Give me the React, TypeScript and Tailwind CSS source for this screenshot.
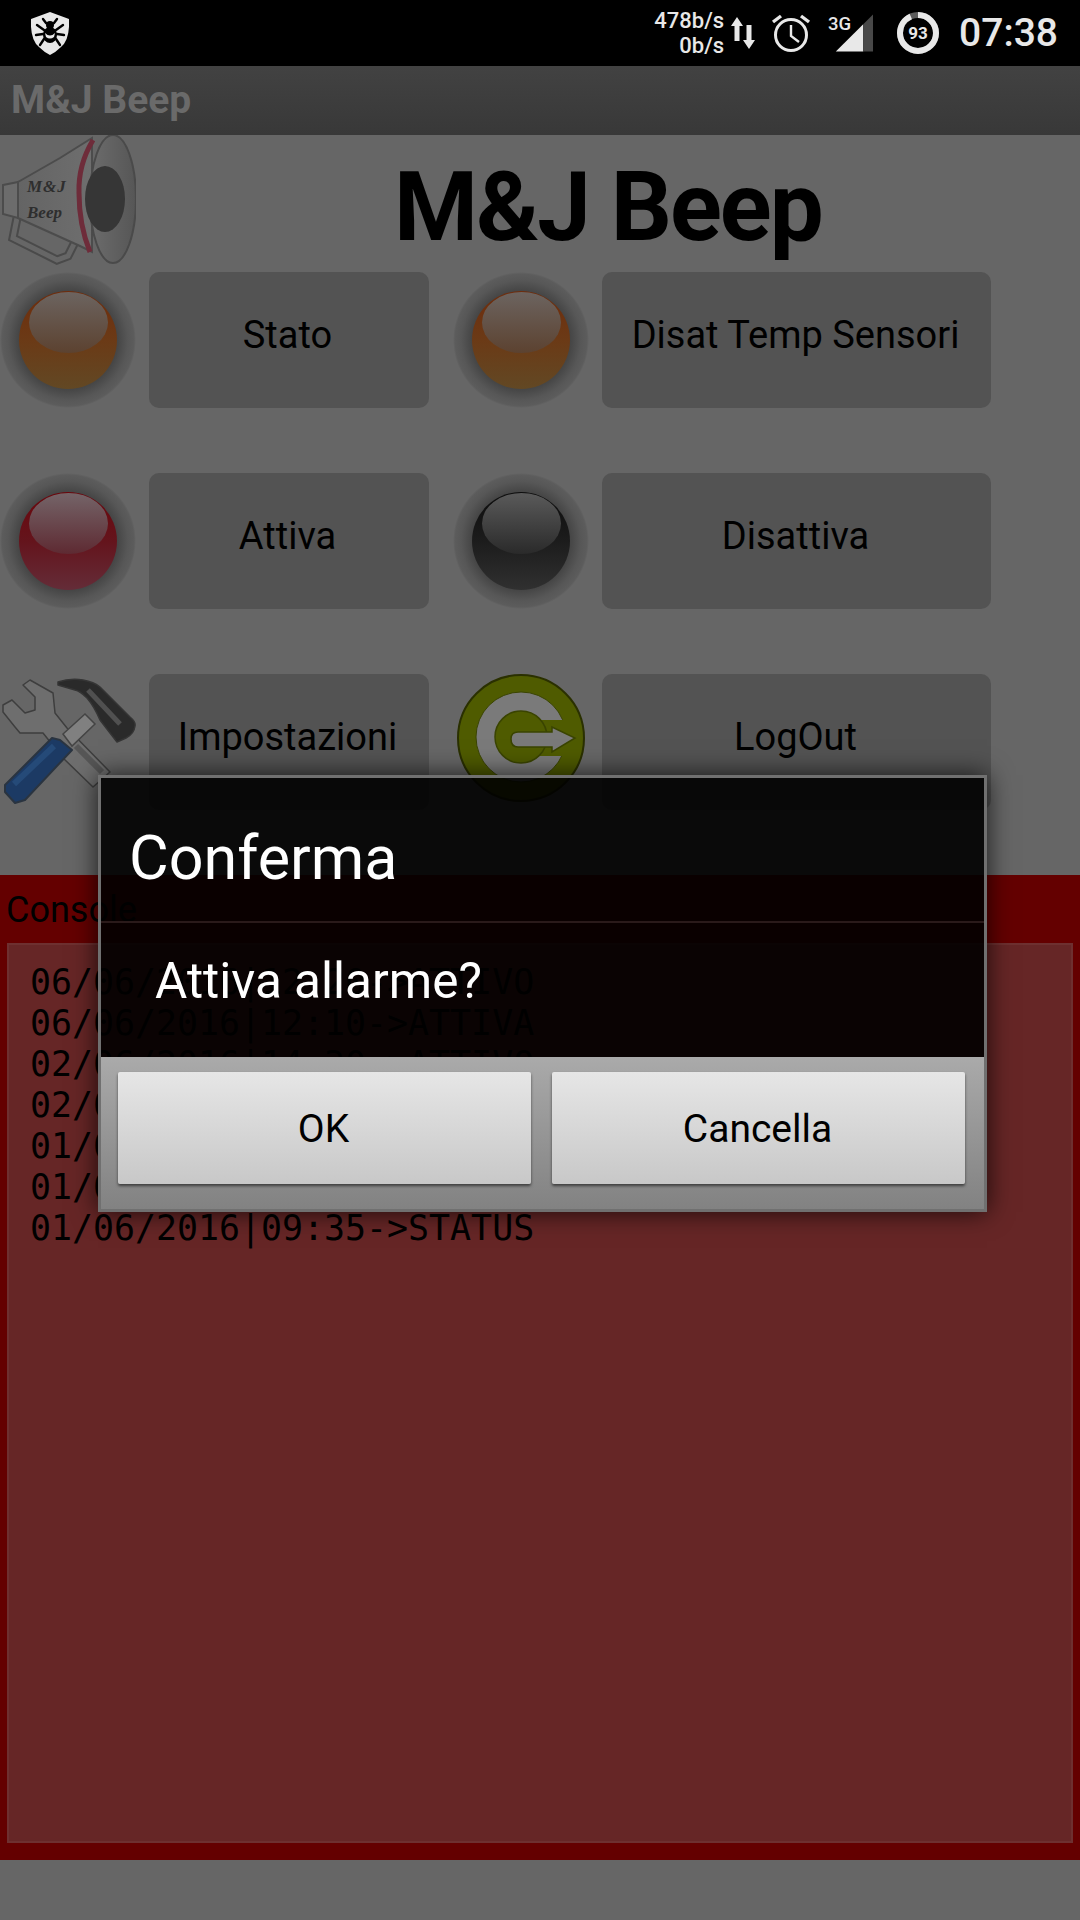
const logLines = [
  "06/06/2016|12:20->ATTIVO",
  "06/06/2016|12:10->ATTIVA",
  "02/06/2016|14:30->ATTIVO",
  "02/06/2016|14:29->STATUS",
  "01/06/2016|09:40->ATTIVA",
  "01/06/2016|09:36->ATTIVO",
  "01/06/2016|09:35->STATUS",
];

const ledColors = {
  orange: { top: "#6e2c0c", mid: "#6b3a16", bottom: "#624824", hiTop: "#6c6460", hiBottom: "#5c4230", edge: "#6c2808" },
  red: { top: "#6a060c", mid: "#64141c", bottom: "#642c38", hiTop: "#746468", hiBottom: "#5e2a32", edge: "#600000" },
  black: { top: "#0c0c0c", mid: "#1c1c1c", bottom: "#303030", hiTop: "#5a5a5a", hiBottom: "#2a2a2a", edge: "#000000" },
};

const Led = ({ color }: { color: keyof typeof ledColors }) => {
  const c = ledColors[color];
  return (
    <svg viewBox="0 0 136 136" className="h-[136px] w-[136px] shrink-0">
      <defs>
        <radialGradient id={`ring-${color}`}>
          <stop offset="0.72" stopColor="#454545" />
          <stop offset="0.8" stopColor="#4e4e4e" />
          <stop offset="0.88" stopColor="#575757" />
          <stop offset="0.97" stopColor="#5c5c5c" />
          <stop offset="1" stopColor="#666666" />
        </radialGradient>
        <linearGradient id={`body-${color}`} x1="0" y1="0" x2="0" y2="1">
          <stop offset="0" stopColor={c.top} />
          <stop offset="0.5" stopColor={c.mid} />
          <stop offset="1" stopColor={c.bottom} />
        </linearGradient>
        <linearGradient id={`hi-${color}`} x1="0" y1="0" x2="0" y2="1">
          <stop offset="0" stopColor={c.hiTop} />
          <stop offset="1" stopColor={c.hiBottom} />
        </linearGradient>
      </defs>
      <circle cx="68" cy="68" r="68" fill={`url(#ring-${color})`} />
      <circle cx="68" cy="68" r="49" fill={`url(#body-${color})`} />
      <path d="M36 32 Q68 8 100 32 Q68 14 36 32Z" fill={c.edge} />
      <ellipse cx="68.5" cy="50.5" rx="39.5" ry="30.5" fill={`url(#hi-${color})`} />
    </svg>
  );
};

const Megaphone = () => (
  <svg viewBox="0 5 136 130" className="h-[130px] w-[136px] shrink-0">
    <defs>
      <linearGradient id="bell" x1="0" y1="0" x2="1" y2="0">
        <stop offset="0" stopColor="#6c6c6c" />
        <stop offset="1" stopColor="#565656" />
      </linearGradient>
      <linearGradient id="cone" x1="0" y1="0" x2="1" y2="0">
        <stop offset="0" stopColor="#646464" />
        <stop offset="1" stopColor="#6e6e6e" />
      </linearGradient>
    </defs>
    <path d="M17 88 L13 108 L57 130 L68 126 L76 110" fill="none" stroke="#4a4a4a" strokeWidth="9" />
    <path d="M17 88 L13 108 L57 130 L68 126 L76 110" fill="none" stroke="#666666" strokeWidth="5" />
    <path d="M3 55 L18 52 L18 88 L3 84Z" fill="#6c6c6c" stroke="#4c4c4c" strokeWidth="2" />
    <path d="M18 52 L60 28 L92 8 L92 122 L80 116 L18 88Z" fill="url(#cone)" stroke="#4c4c4c" strokeWidth="2" />
    <ellipse cx="113" cy="69" rx="23" ry="64" fill="url(#bell)" stroke="#4a4a4a" strokeWidth="2" />
    <ellipse cx="105" cy="69" rx="20" ry="33" fill="#363636" />
    <path d="M93 10 Q78 35 79 63 Q79 95 90 122" fill="none" stroke="#6e2c3a" strokeWidth="5" />
    <text x="27" y="62" fontFamily="'Liberation Serif', serif" fontSize="17" fontStyle="italic" fontWeight="700" fill="#2e2e2e" letterSpacing="1">M&amp;J</text>
    <text x="27" y="88" fontFamily="'Liberation Serif', serif" fontSize="17" fontStyle="italic" fontWeight="700" fill="#2e2e2e">Beep</text>
  </svg>
);

const Tools = () => (
  <svg viewBox="0 4 136 136" className="h-[136px] w-[136px] shrink-0">
    <path d="M3 35 L12 30 L25 43 L35 40 L35 27 L23 15 L30 10 L53 23 L55 43 L67 58 L110 102 L93 117 L63 88 L43 63 L20 63 L15 57 L3 42Z" fill="#6e6e6e" stroke="#3e3e3e" strokeWidth="1.5" strokeLinejoin="round" />
    <path d="M76 76 L102 102" stroke="#565656" strokeWidth="6" fill="none" />
    <path d="M63 64 L85 44 L95 54 L72 76Z" fill="#808080" stroke="#444444" strokeWidth="1.5" />
    <path d="M5 115 L52 68 L60 70 L72 80 L25 130 L15 133 L5 122Z" fill="#1c3a64" stroke="#2a3440" strokeWidth="2" strokeLinejoin="round" />
    <path d="M14 114 L54 76" stroke="#254a78" strokeWidth="6" fill="none" />
    <path d="M58 12 Q70 8 83 10 Q94 12 100 17 L130 47 Q136 52 135 56 Q134 64 126 68 L117 72 L110 63 L100 50 Q94 36 87 28 Q80 21 75 20 L58 15Z" fill="#2a2a2a" stroke="#353535" strokeWidth="1.5" strokeLinejoin="round" />
    <path d="M88 20 L120 54" stroke="#505050" strokeWidth="5" fill="none" />
  </svg>
);

const LogoutIcon = () => (
  <svg viewBox="3 4 136 136" className="h-[136px] w-[136px] shrink-0">
    <circle cx="71" cy="68" r="63" fill="#4f5b00" stroke="#2a3000" strokeWidth="2" />
    <circle cx="71" cy="67" r="45" fill="#7a7a7a" stroke="#3a4400" strokeWidth="1" />
    <rect x="88" y="50" width="32" height="36" fill="#4f5b00" />
    <circle cx="71" cy="67" r="26" fill="#4f5b00" stroke="#3a4400" strokeWidth="1.5" />
    <path d="M68 62 H102 V57 L125 68 L102 82 V77 H68 Q61 77 61 69 Q61 62 68 62Z" fill="#7a7a7a" stroke="#3a4400" strokeWidth="1.5" />
  </svg>
);

const ActionButton = ({ label, width, inset }: { label: string; width: string; inset: string }) => (
  <button className={`flex h-[136px] items-start justify-center rounded-[10px] bg-[#535353] pt-[35px] text-[38px] leading-[56px] text-black ${inset} ${width}`}>
    {label}
  </button>
);

const DialogButton = ({ label }: { label: string }) => (
  <button className="h-[112px] flex-1 rounded-[2px] bg-gradient-to-b from-[#e6e6e6] to-[#c8c8c8] pr-[2px] pt-[3px] text-[39px] text-black shadow-[0_2px_3px_rgba(0,0,0,0.55)]">
    {label}
  </button>
);

const StatusBar = () => (
  <div className="flex h-[66px] items-center justify-between bg-black pl-[31px] pr-[22px] text-[#e8e8e8]">
    <svg viewBox="0 0 38 43" className="h-[43px] w-[38px]">
      <path d="M19 0 L38 7 Q39 28 30 35 Q25 40 19 43 Q13 40 8 35 Q-1 28 0 7Z" fill="#e8e8e8" />
      <ellipse cx="19" cy="23" rx="7" ry="8" fill="#000" />
      <circle cx="19" cy="13" r="4" fill="#000" />
      <path d="M14 21 Q19 26 24 21 L23 25 Q19 28 15 25Z" fill="#e8e8e8" />
      <path d="M12 7 L15 11 M26 7 L23 11 M6 13 L13 18 M32 13 L25 18 M5 23 L12 22 M33 23 L26 22 M9 33 L13 27 M29 33 L25 27" stroke="#000" strokeWidth="2.4" strokeLinecap="round" fill="none" />
    </svg>
    <div className="flex items-center">
      <div className="flex flex-col items-end text-[22px] font-medium leading-[25px]">
        <span>478b/s</span>
        <span>0b/s</span>
      </div>
      <svg viewBox="0 0 26 36" className="ml-[6px] h-[36px] w-[26px]">
        <path d="M7 2 L13 11 H9.5 V26 H4.5 V11 H1Z" fill="#e8e8e8" />
        <path d="M19 34 L25 25 H21.5 V10 H16.5 V25 H13Z" fill="#e8e8e8" />
      </svg>
      <svg viewBox="0 0 40 40" className="ml-[15px] h-[40px] w-[40px]" fill="none" stroke="#e8e8e8">
        <circle cx="20" cy="22" r="15.5" strokeWidth="3" />
        <path d="M20 12 V23 L28 29" strokeWidth="2.4" />
        <path d="M2 9 L10 3 M38 9 L30 3" strokeWidth="3.4" />
      </svg>
      <div className="relative ml-[15px] h-[40px] w-[48px]">
        <svg viewBox="0 0 49 40" className="h-[40px] w-[48px]">
          <path d="M10 39 L38 11 V39Z" fill="#e8e8e8" />
          <path d="M38 11 L48 1 V39 H38Z" fill="#484848" />
        </svg>
        <span className="absolute left-[2px] top-[1px] text-[18.5px] font-medium leading-[20px]">3G</span>
      </div>
      <div className="relative ml-[23px] flex h-[42px] w-[42px] items-center justify-center">
        <svg viewBox="0 0 42 42" className="absolute inset-0 h-[42px] w-[42px]" fill="none" strokeWidth="6">
          <circle cx="21" cy="21" r="18" stroke="#5c5c5c" />
          <circle cx="21" cy="21" r="18" stroke="#e8e8e8" strokeDasharray="105 113" transform="rotate(-90 21 21)" />
        </svg>
        <span className="text-[17px] font-bold leading-none">93</span>
      </div>
      <span className="ml-[20px] text-[39px] font-medium leading-none">07:38</span>
    </div>
  </div>
);

export default function App() {
  return (
    <div className="relative h-[1920px] w-[1080px] overflow-hidden bg-[#666666] font-['Roboto',sans-serif]">
      <StatusBar />
      <div className="flex h-[69px] items-center bg-gradient-to-b from-[#424242] to-[#383838] pl-[11px] text-[39px] font-bold text-[#6a6a6a]">
        M&amp;J Beep
      </div>

      <div className="flex h-[137px] items-start">
        <Megaphone />
        <h1 className="ml-[258px] mt-[16px] text-[96px] font-bold leading-[112px] tracking-[-2px] text-black">M&amp;J Beep</h1>
      </div>

      <div className="flex flex-col gap-[65px]">
        <div className="flex items-start">
          <Led color="orange" />
          <div className="ml-[13px]"><ActionButton label="Stato" width="w-[280px]" inset="pr-[3px]" /></div>
          <div className="ml-[24px]"><Led color="orange" /></div>
          <div className="ml-[13px]"><ActionButton label="Disat Temp Sensori" width="w-[389px]" inset="pr-[2px]" /></div>
        </div>
        <div className="flex items-start">
          <Led color="red" />
          <div className="ml-[13px]"><ActionButton label="Attiva" width="w-[280px]" inset="pr-[3px]" /></div>
          <div className="ml-[24px]"><Led color="black" /></div>
          <div className="ml-[13px]"><ActionButton label="Disattiva" width="w-[389px]" inset="pr-[2px]" /></div>
        </div>
        <div className="flex items-start">
          <Tools />
          <div className="ml-[13px]"><ActionButton label="Impostazioni" width="w-[280px]" inset="pr-[3px]" /></div>
          <div className="ml-[24px]"><LogoutIcon /></div>
          <div className="ml-[13px]"><ActionButton label="LogOut" width="w-[389px]" inset="pr-[2px]" /></div>
        </div>
      </div>

      <section className="mt-[65px] flex h-[985px] flex-col bg-[#640000] px-[7px]">
        <div className="-ml-[1px] h-[68px] pt-[10px] text-[36px] leading-[50px] text-black">Console</div>
        <div className="h-[900px] border-2 border-[#6e3030] bg-[#662626] pl-[21px] pt-[17px] font-['DejaVu_Sans_Mono',monospace] text-[34.9px] leading-[41px] text-black">
          {logLines.map((line, i) => (
            <div key={i}>{line}</div>
          ))}
        </div>
      </section>

      {/* dialog */}
      <div className="absolute left-[98px] top-[775px] flex h-[437px] w-[889px] flex-col border-[3px] border-[#707070] bg-black/90 shadow-[0_0_24px_rgba(0,0,0,0.75)]">
        <div className="flex h-[145px] items-center border-b-2 border-[#2a1a1a] pl-[28px] pt-[18px] text-[61px] text-white">
          Conferma
        </div>
        <div className="flex h-[134px] items-center pb-[18px] pl-[54px] text-[49.5px] text-white">
          Attiva allarme?
        </div>
        <div className="flex flex-1 items-start gap-[21px] bg-gradient-to-b from-[#aaaaaa] to-[#828282] pl-[17px] pr-[19px] pt-[15px]">
          <DialogButton label="OK" />
          <DialogButton label="Cancella" />
        </div>
      </div>
    </div>
  );
}
